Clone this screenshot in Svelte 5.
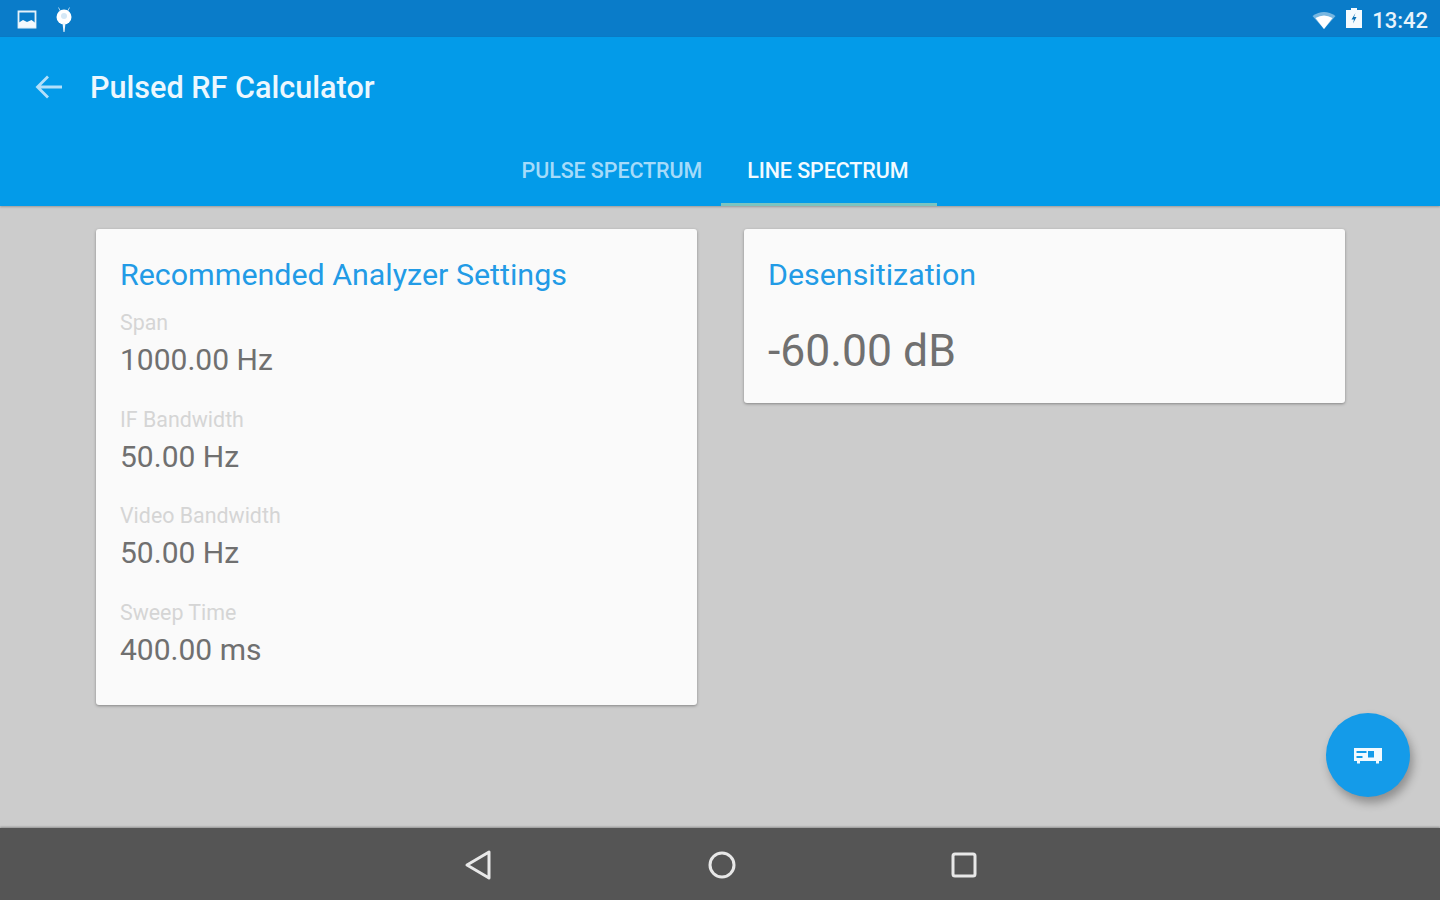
<script>
    const settings = [
        {label: 'Span', value: '1000.00 Hz'},
        {label: 'IF Bandwidth', value: '50.00 Hz'},
        {label: 'Video Bandwidth', value: '50.00 Hz'},
        {label: 'Sweep Time', value: '400.00 ms'}
    ];
</script>

<div class="screen">
    <div class="status">
        <svg class="ico" width="22" height="22" viewBox="0 0 22 22">
            <path d="M2.500 3.500h17v16h-17z" fill="none" stroke="#e6f2fa" stroke-width="1.800"/>
            <path d="M3 19v-4.500l4-2.500 4 2 4.500-2 4 3V19z" fill="#f4f9fd"/>
        </svg>
        <svg class="ico pin" width="20" height="26" viewBox="0 0 20 26">
            <path d="M4.500 0.500l2 4M15.500 0.500l-2 4" stroke="#a9d2ee" stroke-width="1"/>
            <circle cx="10" cy="10" r="7.500" fill="#fff"/>
            <circle cx="10" cy="9" r="3" fill="#d5e8f6"/>
            <path d="M8.500 16h3l-1 9h-1z" fill="#f0f7fc"/>
        </svg>
        <span class="spacer"></span>
        <svg class="ico wifi" width="24" height="18" viewBox="0 0 24 18">
            <path d="M0.500 5Q12-3 23.500 5L12 18z" fill="#fff" opacity="0.45"/>
            <path d="M3.500 7Q12 2 20.500 7L12 18z" fill="#fff"/>
        </svg>
        <svg class="ico batt" width="18" height="22" viewBox="0 0 18 22">
            <path d="M6 1h6v2h5v18H1V3h5z" fill="#f6fbfe"/>
            <path d="M10.500 6L6.500 12.500h2.500l-1 4 3.500-6.500H9z" fill="#0a70b5"/>
        </svg>
        <span class="clock">13:42</span>
    </div>

    <header class="appbar">
        <div class="titlerow">
            <svg class="back" width="28" height="26" viewBox="0 0 28 26" fill="none" stroke="#b3e0fa" stroke-width="2.800">
                <path d="M27 13H3M13 2.500L2.500 13 13 23.500"/>
            </svg>
            <h1>Pulsed RF Calculator</h1>
        </div>
        <nav class="tabs">
            <div class="tab">PULSE SPECTRUM</div>
            <div class="tab active">LINE SPECTRUM</div>
        </nav>
    </header>

    <main class="content">
        <section class="card">
            <h2>Recommended Analyzer Settings</h2>
            {#each settings as s}
                <div class="item">
                    <div class="label">{s.label}</div>
                    <div class="value">{s.value}</div>
                </div>
            {/each}
        </section>
        <section class="card small">
            <h2>Desensitization</h2>
            <div class="big">-60.00 dB</div>
        </section>
        <button class="fab" aria-label="analyzer">
            <svg width="30" height="20" viewBox="0 0 30 20">
                <path d="M1 3h28v13h-3v2.500h-3V16H7v2.500H4V16H1z" fill="#f2faff"/>
                <path d="M3.500 6h10v2h-10zM3.500 11h6v2h-6z" fill="#149be9"/>
                <path d="M15 6h6v6.500h-6z" fill="#149be9"/>
            </svg>
        </button>
    </main>

    <footer class="navbar">
        <svg width="30" height="32" viewBox="0 0 30 32" fill="none" stroke="#e8e8e8" stroke-width="3" stroke-linejoin="round">
            <path d="M25 3v26L3 16z"/>
        </svg>
        <svg width="30" height="30" viewBox="0 0 30 30" fill="none" stroke="#e8e8e8" stroke-width="3">
            <circle cx="15" cy="15" r="12"/>
        </svg>
        <svg width="28" height="28" viewBox="0 0 28 28" fill="none" stroke="#e8e8e8" stroke-width="3" stroke-linejoin="round">
            <rect x="3" y="3" width="22" height="22" rx="2"/>
        </svg>
    </footer>
</div>

<style>
    :global(body){
        margin: 0;
    }
    .screen{
        width: 1440px;
        height: 900px;
        display: flex;
        flex-direction: column;
        font-family: Roboto, sans-serif;
        overflow: hidden;
        background: #ccc;
    }
    .status{
        height: 37px;
        flex: none;
        display: flex;
        align-items: center;
        padding: 0 12px 0 16px;
        box-sizing: border-box;
        background: #0a7cc9;
    }
    .ico{
        flex: none;
    }
    .pin{
        margin-left: 16px;
        margin-top: 2px;
    }
    .spacer{
        flex: 1;
    }
    .wifi{
        margin-top: 3px;
    }
    .batt{
        margin-left: 9px;
        margin-top: -1px;
    }
    .clock{
        margin-left: 9px;
        margin-top: 3px;
        color: #e8f3fb;
        font-size: 22px;
        font-weight: 500;
    }
    .appbar{
        height: 169px;
        flex: none;
        box-sizing: border-box;
        background: #039be9;
        display: flex;
        flex-direction: column;
        position: relative;
        z-index: 1;
        box-shadow: 0 1px 2px rgba(0,0,0,0.25);
    }
    .titlerow{
        height: 100px;
        display: flex;
        align-items: center;
        padding-left: 35px;
        gap: 27px;
    }
    .back{
        flex: none;
    }
    h1{
        margin: 0;
        font-size: 30.600px;
        font-weight: 500;
        color: #ecf7fe;
    }
    .tabs{
        flex: 1;
        display: flex;
        justify-content: center;
        align-items: stretch;
    }
    .tab{
        padding: 0 19px 3px;
        display: flex;
        align-items: center;
        box-sizing: border-box;
        font-size: 21.500px;
        font-weight: 500;
        color: #a5dbfa;
        letter-spacing: -0.1px;
    }
    .tab.active{
        color: #f2faff;
        border-bottom: 3px solid #7cc4c0;
        padding: 0 29px 0 26px;
    }
    .content{
        flex: 1;
        position: relative;
        display: flex;
        align-items: flex-start;
        gap: 47px;
        padding: 23px 0 0 96px;
        box-sizing: border-box;
    }
    .card{
        width: 601px;
        height: 476px;
        box-sizing: border-box;
        padding: 24px 24px 0;
        background: #fafafa;
        border-radius: 3px;
        box-shadow: 0 1px 3px rgba(0,0,0,0.35);
    }
    .card.small{
        height: 174px;
    }
    h2{
        margin: 0 0 12px;
        font-size: 30.400px;
        line-height: 44px;
        font-weight: 400;
        color: #229be6;
    }
    .item{
        height: 96.600px;
    }
    .label{
        font-size: 21.400px;
        line-height: 27px;
        color: #d5d5d5;
    }
    .value{
        font-size: 30px;
        line-height: 47px;
        color: #707070;
    }
    .big{
        margin-top: 26px;
        font-size: 44.500px;
        line-height: 56px;
        color: #707070;
    }
    .fab{
        position: absolute;
        left: 1326px;
        top: 507px;
        width: 84px;
        height: 84px;
        padding: 0;
        border: none;
        border-radius: 50%;
        background: #149be9;
        display: flex;
        align-items: center;
        justify-content: center;
        box-shadow: 3px 6px 10px rgba(0,0,0,0.3);
    }
    .navbar{
        height: 72px;
        flex: none;
        display: flex;
        align-items: center;
        justify-content: center;
        gap: 213px;
        padding: 2px 0 0 1px;
        box-sizing: border-box;
        background: #555;
        box-shadow: 0 -1px 2px rgba(0,0,0,0.3);
    }
</style>
